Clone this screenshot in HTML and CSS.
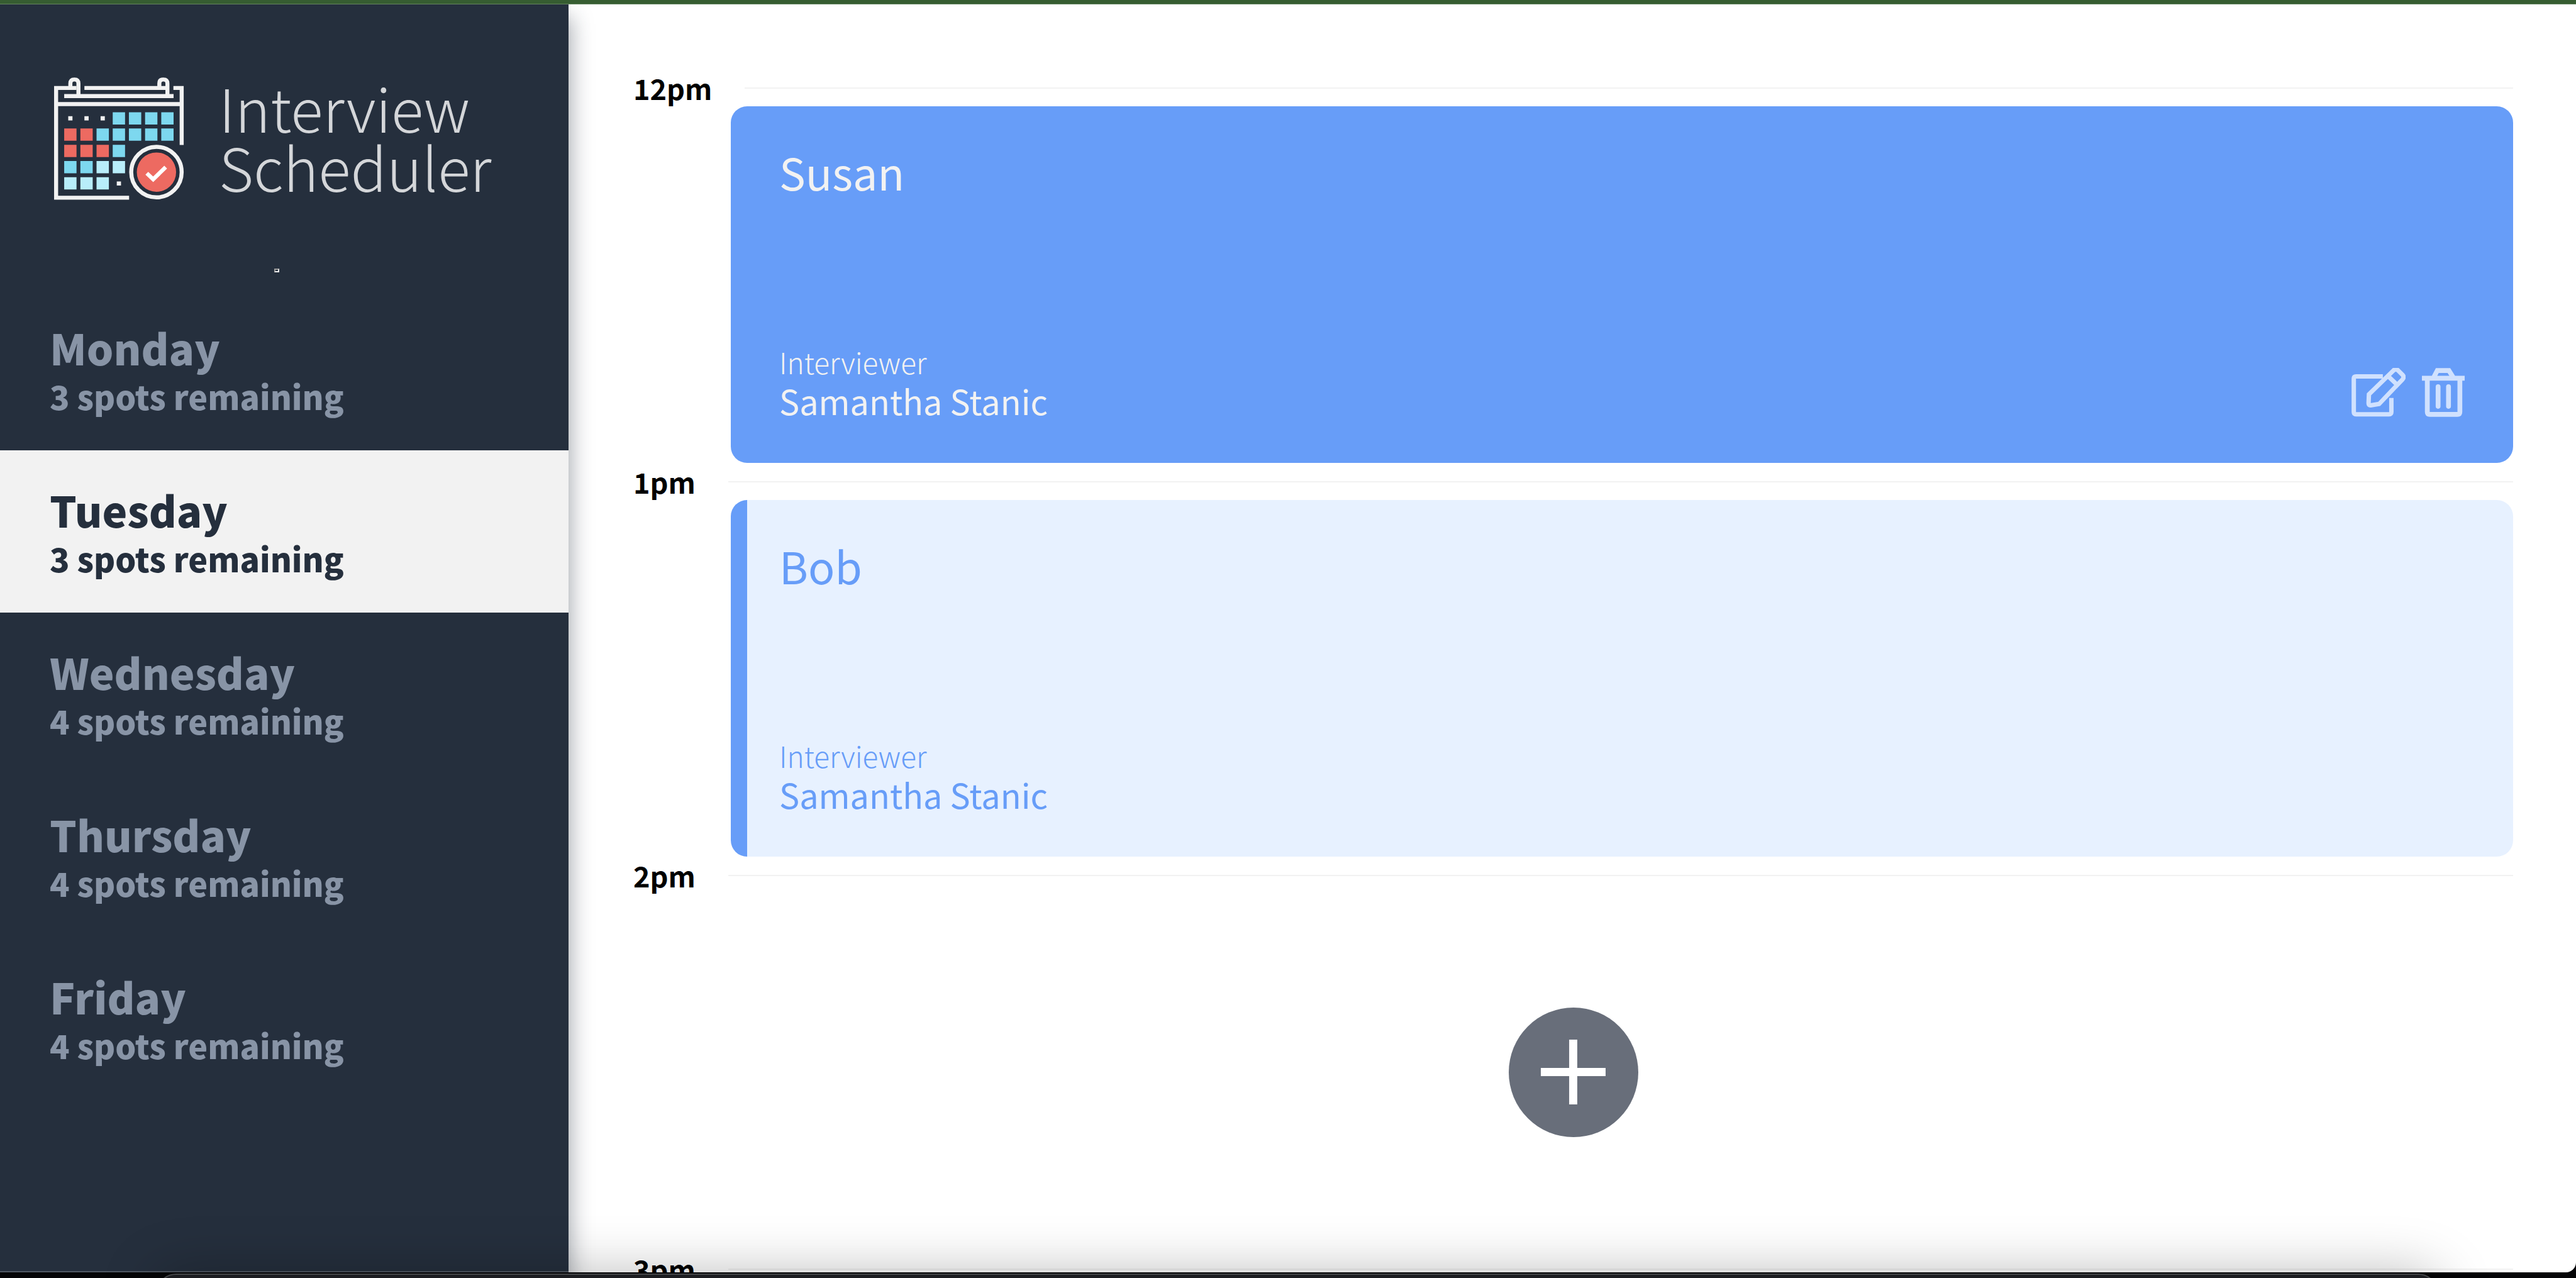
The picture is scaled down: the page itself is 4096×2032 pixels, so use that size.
FILE: index.html
```html
<!DOCTYPE html>
<html lang="en">
<head>
<meta charset="utf-8">
<title>Interview Scheduler</title>
<link rel="stylesheet" href="styles.css">
</head>
<body>
<div class="window">
  <aside class="sidebar">
    <a class="logo" href="#">
      <svg class="logo-mark" viewBox="102 100 675 640" aria-hidden="true">
        <g fill="none" stroke="#f2f2f2" stroke-width="21">
          <path d="M218 155H112V725H491"/>
          <path d="M186 155V132Q186 111 207 111Q228 111 228 132V197"/>
          <path d="M259 155H690M648 155V132Q648 111 669 111Q690 111 690 132V197"/>
          <path d="M721 155H764V451"/>
          <path d="M154 197H722M112 239H764"/>
          <circle cx="633" cy="592" r="131"/>
        </g>
        <path fill="#f2f2f2" d="M175 302h22v22h-22zM259 302h22v22h-22zM343 302h22v22h-22zM427 640h22v22h-22z"/>
        <path fill="#7dd8ef" d="M406 281h64v64h-64zM490 281h64v64h-64zM574 281h64v64h-64zM658 281h64v64h-64zM322 365h64v64h-64zM406 365h64v64h-64zM490 365h64v64h-64zM574 365h64v64h-64zM658 365h64v64h-64zM406 450h64v64h-64zM154 534h64v64h-64zM238 534h64v64h-64z"/>
        <path fill="#ed6a61" d="M154 365h64v64h-64zM238 365h64v64h-64zM154 450h64v64h-64zM238 450h64v64h-64zM322 450h64v64h-64z"/>
        <path fill="#b8edfa" d="M322 534h64v64h-64zM406 534h64v64h-64zM154 618h64v64h-64zM238 618h64v64h-64zM322 618h64v64h-64z"/>
        <circle cx="633" cy="592" r="102" fill="#ed6a61"/>
        <path fill="none" stroke="#fff" stroke-width="21" d="M583 598L616 629L681 566"/>
      </svg>
      <span class="logo-text">Interview<br>Scheduler</span>
    </a>
    <hr class="separator">
    <nav class="days">
      <a class="day" href="#"><span class="day-name">Monday</span><span class="day-spots">3 spots remaining</span></a>
      <a class="day day-selected" href="#"><span class="day-name">Tuesday</span><span class="day-spots">3 spots remaining</span></a>
      <a class="day" href="#"><span class="day-name">Wednesday</span><span class="day-spots">4 spots remaining</span></a>
      <a class="day" href="#"><span class="day-name">Thursday</span><span class="day-spots">4 spots remaining</span></a>
      <a class="day" href="#"><span class="day-name">Friday</span><span class="day-spots">4 spots remaining</span></a>
    </nav>
  </aside>
  <main class="schedule">
    <article class="slot">
      <header class="slot-time"><h4>12pm</h4><hr></header>
      <section class="card card-active">
        <h2 class="card-name">Susan</h2>
        <div class="card-foot">
          <div class="interviewer">
            <h4 class="interviewer-label">Interviewer</h4>
            <h3 class="interviewer-name">Samantha Stanic</h3>
          </div>
          <div class="actions">
            <button class="icon-button" type="button" aria-label="Edit">
              <svg class="icon-edit" viewBox="186 168 282 252" fill="none" stroke="currentColor" stroke-width="23">
                <path d="M338 210H210Q198 210 198 222V396Q198 408 210 408H382Q394 408 394 396V334" stroke-linecap="square"/>
                <path d="M277 304L405 179Q417 168 429 179L452 202Q463 214 452 226L330 354L286 361Q275 362 275 350ZM380 212L424 254"/>
              </svg>
            </button>
            <button class="icon-button" type="button" aria-label="Delete">
              <svg class="icon-trash" viewBox="552 168 222 252" fill="none" stroke="currentColor" stroke-width="25">
                <path d="M552 220H774M612 218L632 180H692L716 218M580 225V395Q580 408 593 408H736Q749 408 749 395V225"/>
                <path d="M636 264V366M690 264V366" stroke-linecap="round"/>
              </svg>
            </button>
          </div>
        </div>
      </section>
    </article>
    <article class="slot">
      <header class="slot-time"><h4>1pm</h4><hr></header>
      <section class="card card-booked">
        <h2 class="card-name">Bob</h2>
        <div class="card-foot">
          <div class="interviewer">
            <h4 class="interviewer-label">Interviewer</h4>
            <h3 class="interviewer-name">Samantha Stanic</h3>
          </div>
        </div>
      </section>
    </article>
    <article class="slot">
      <header class="slot-time"><h4>2pm</h4><hr></header>
      <div class="empty">
        <button class="add-button" type="button" aria-label="Add">
          <svg class="icon-add" viewBox="0 0 112 112" aria-hidden="true"><path d="M49 0h14v49h49v14H63v49H49V63H0V49h49z" fill="#fff"/></svg>
        </button>
      </div>
    </article>
    <article class="slot">
      <header class="slot-time"><h4>3pm</h4><hr></header>
    </article>
  </main>
</div>
<div class="desktop"><div class="dock"></div></div>
</body>
</html>
```
FILE: styles.css
```css
* { box-sizing: border-box; }

body {
  margin: 0;
  height: 100vh;
  overflow: hidden;
  display: flex;
  flex-direction: column;
  background: #050507;
  color: #000;
  font-family: "Noto Sans CJK JP", "Noto Sans", sans-serif;
  border-top: 6px solid #365d31;
}

h2, h3, h4 { margin: 0; }
button { border: 0; padding: 0; background: none; color: inherit; cursor: pointer; }
svg { display: block; }

.window {
  flex: 1;
  min-height: 0;
  display: flex;
  overflow: hidden;
  background: #fff;
  border-top: 1px solid #648560;
  border-radius: 0 0 16px 0;
}

.sidebar {
  flex: 0 0 904px;
  background: #252f3d;
  border-bottom: 2px solid #505863;
  box-shadow: 4px 20px 32px rgba(34, 45, 60, 0.4);
}

.logo {
  display: flex;
  gap: 55px;
  padding: 116px 0 0 86px;
  color: #d4d6d9;
  text-decoration: none;
}
.logo-mark { width: 207px; height: 196px; }
.logo-text { font-size: 95px; line-height: 94px; font-weight: 300; }

.separator {
  width: 8px;
  height: 6px;
  margin: 108px 0 25px 436px;
  border: 2px solid;
  border-color: #9a9a9a #eee #eee #9a9a9a;
}

.day {
  display: flex;
  flex-direction: column;
  gap: 6px;
  height: 258px;
  padding: 58px 79px 0;
  color: #8894a6;
  font-weight: 900;
  line-height: 72px;
  text-decoration: none;
}
.day-name { font-size: 67px; }
.day-spots { font-size: 52px; }
.day-selected { background: #f2f2f2; color: #252f3d; }

.schedule {
  flex: 1;
  padding: 103px 100px 0 103px;
}

.slot-time {
  display: flex;
  align-items: center;
  gap: 52px;
  height: 59px;
}
.slot-time h4 { font-size: 45px; line-height: 59px; font-weight: 700; }
.slot-time hr { flex: 1; margin: 0; border: 0; height: 2px; background: #f2f2f2; }

.card {
  display: flex;
  flex-direction: column;
  justify-content: space-between;
  height: 567px;
  margin-left: 155px;
  padding: 68px 77px 68px 77px;
  border-radius: 26px;
}
.card-active { background: #679df8; color: #f2f2f2; }
.card-booked {
  padding-left: 51px;
  border-left: 26px solid #679df8;
  background: #e7f1ff;
  color: #679df8;
}
.card-name { font-size: 70px; line-height: 72px; font-weight: 400; }
.card-foot { display: flex; justify-content: space-between; align-items: flex-end; }
.interviewer { line-height: 62px; }
.interviewer-label { font-size: 46px; font-weight: 300; }
.interviewer-name { font-size: 54px; font-weight: 400; }

.actions { display: flex; gap: 26px; padding-bottom: 5px; color: #d0e1fe; }
.icon-edit { width: 86px; height: 78px; }
.icon-trash { width: 68px; height: 78px; }

.empty { display: flex; align-items: center; justify-content: center; height: 567px; }
.add-button {
  display: flex;
  align-items: center;
  justify-content: center;
  width: 206px;
  height: 206px;
  border-radius: 50%;
  background: #686e7a;
}
.icon-add { width: 103px; height: 103px; }

.desktop {
  position: relative;
  flex: none;
  height: 9px;
  padding: 2px 219px 0 248px;
}
.dock {
  height: 90px;
  border: 2px solid #454749;
  border-radius: 32px;
  background: #1c1d21;
  box-shadow: 0 0 88px rgba(0, 0, 0, 0.28);
}
```
